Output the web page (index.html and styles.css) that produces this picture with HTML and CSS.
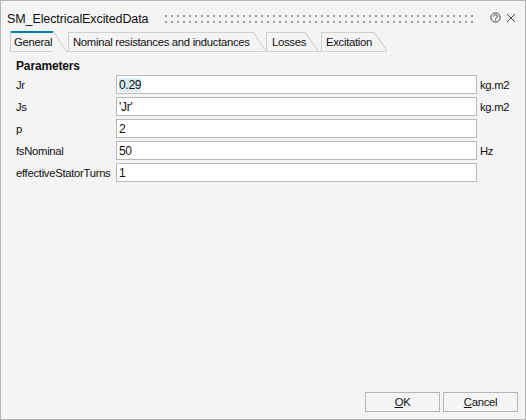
FILE: index.html
```html
<!DOCTYPE html>
<html lang="en">
<head>
    <meta charset="UTF-8">
    <title>SM_ElectricalExcitedData</title>
    <link rel="stylesheet" href="styles.css">
</head>
<body>
    <div class="dialog">
        <div class="title-bar">
            <span class="title">SM_ElectricalExcitedData</span>
            <div class="grip"></div>
            <svg class="help" width="11" height="11" viewBox="0 0 11 11">
                <circle cx="5.5" cy="5.5" r="4.6" fill="none" stroke="#444" stroke-width="1"/>
                <path d="M3.8 4.4 A1.8 1.6 0 1 1 6.2 5.9 Q5.5 6.2 5.5 7" fill="none" stroke="#444" stroke-width="1"/>
                <rect x="5" y="7.6" width="1" height="1" fill="#444"/>
            </svg>
            <svg class="close" width="10" height="10" viewBox="0 0 10 10">
                <path d="M1 1 L9 9 M9 1 L1 9" stroke="#444" stroke-width="1"/>
            </svg>
        </div>

        <div class="tabs">
            <div class="tab active">General</div>
            <div class="tab nominal">Nominal resistances and inductances</div>
            <div class="tab losses">Losses</div>
            <div class="tab excitation">Excitation</div>
        </div>

        <div class="panel">
            <h2 class="group-title">Parameters</h2>
            <div class="param-row">
                <span class="param-label">Jr</span>
                <div class="param-input"><span class="selected">0.29</span></div>
                <span class="param-unit">kg.m2</span>
            </div>
            <div class="param-row">
                <span class="param-label">Js</span>
                <div class="param-input">'Jr'</div>
                <span class="param-unit">kg.m2</span>
            </div>
            <div class="param-row">
                <span class="param-label">p</span>
                <div class="param-input">2</div>
                <span class="param-unit"></span>
            </div>
            <div class="param-row">
                <span class="param-label">fsNominal</span>
                <div class="param-input">50</div>
                <span class="param-unit">Hz</span>
            </div>
            <div class="param-row">
                <span class="param-label">effectiveStatorTurns</span>
                <div class="param-input">1</div>
                <span class="param-unit"></span>
            </div>
        </div>

        <div class="footer">
            <button class="dialog-button"><u>O</u>K</button>
            <button class="dialog-button"><u>C</u>ancel</button>
        </div>
    </div>
</body>
</html>
```

FILE: styles.css
```css
html, body {
    margin: 0;
    height: 100%;
}

body {
    font-family: "Liberation Sans", Arial, sans-serif;
    font-size: 11.3px;
    letter-spacing: -0.3px;
    color: #111;
    background: #f4f4f4;
}

.dialog {
    box-sizing: border-box;
    width: 526px;
    height: 420px;
    display: flex;
    flex-direction: column;
    background: #f4f4f4;
    border: 1px solid #b4b4b4;
}

.title-bar {
    box-sizing: border-box;
    display: flex;
    align-items: center;
    height: 30px;
    padding: 5px 0 0 6px;
    flex-shrink: 0;
}

.title {
    font-size: 12.5px;
    letter-spacing: -0.1px;
    width: 158px;
    margin-top: 1px;
    white-space: nowrap;
}

.grip {
    width: 312px;
    height: 8px;
    background-image: linear-gradient(to right, #9c9c9c 2px, transparent 2px), linear-gradient(to right, #9c9c9c 2px, transparent 2px);
    background-size: 6px 2px;
    background-position: 0 0, 0 6px;
    background-repeat: repeat-x;
}

.help {
    margin: -2px 0 0 13px;
}

.close {
    margin: -2px 0 0 5px;
}

.tabs {
    display: flex;
    align-items: flex-end;
    height: 20px;
    margin-left: 9px;
    width: 377px;
    border-bottom: 1px solid #d4d4d4;
    flex-shrink: 0;
}

.tab {
    box-sizing: border-box;
    height: 19px;
    padding: 4px 0 0 4px;
    border-left: 1px solid #cfcfcf;
    background:
        linear-gradient(#cfcfcf, #cfcfcf) no-repeat left top / calc(100% - 13px) 1px,
        linear-gradient(to top right, #f4f4f4 calc(50% - 1px), #cfcfcf 50%, transparent calc(50% + 1px)) no-repeat right top / 13px 100%;
    white-space: nowrap;
}

.tab.active {
    width: 57px;
    height: 21px;
    margin-bottom: -1px;
    padding: 5px 0 0 3px;
    background:
        linear-gradient(#0a7ea4, #0a7ea4) no-repeat left top / calc(100% - 14px) 2px,
        linear-gradient(to top right, #f4f4f4 calc(50% - 1px), #cfcfcf 50%, transparent calc(50% + 1px)) no-repeat right top / 14px 100%;
}

.tab.nominal {
    width: 198px;
    margin-left: 1px;
}

.tab.losses {
    width: 52px;
    padding-left: 5px;
}

.tab.excitation {
    width: 66px;
    margin-left: 3px;
}

.panel {
    flex: 1;
    padding: 6px 0 0 15px;
}

.group-title {
    margin: 0 0 1px;
    font-size: 12px;
    letter-spacing: -0.15px;
    font-weight: bold;
    line-height: 16px;
}

.param-row {
    display: flex;
    align-items: center;
    height: 19px;
    margin-bottom: 3px;
}

.param-label {
    width: 100px;
    white-space: nowrap;
}

.param-input {
    box-sizing: border-box;
    width: 361px;
    height: 19px;
    padding: 2px 0 0 2px;
    background: #fff;
    border: 1px solid #b8b8b8;
    line-height: 15px;
    font-size: 12px;
}

.selected {
    background: #d9ecf5;
}

.param-unit {
    margin-left: 3px;
}

.footer {
    display: flex;
    justify-content: flex-end;
    gap: 3px;
    padding: 0 7px 7px 0;
}

.dialog-button {
    box-sizing: border-box;
    width: 75px;
    height: 20px;
    padding: 0;
    font: inherit;
    letter-spacing: inherit;
    color: #111;
    background: #f4f4f4;
    border: 1px solid #b4b4b4;
}
```
